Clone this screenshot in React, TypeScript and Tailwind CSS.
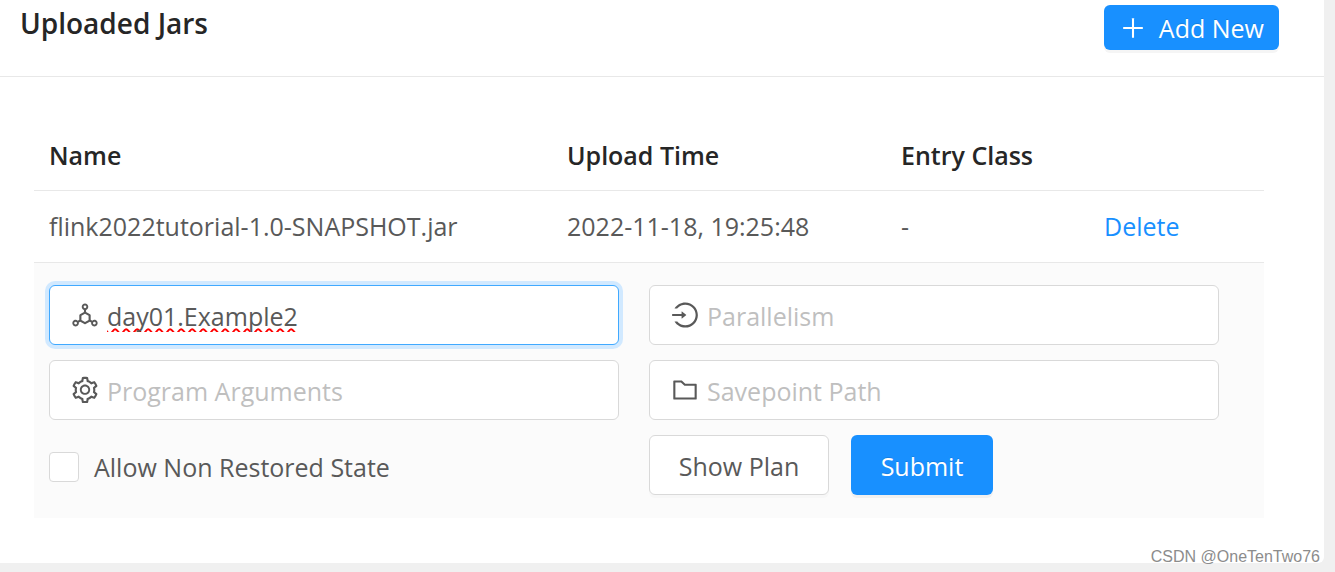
import { useState } from "react";
import type { ReactNode } from "react";
import {
    AiOutlineDeploymentUnit,
    AiOutlineFolder,
    AiOutlineLogin,
    AiOutlinePlus,
    AiOutlineSetting,
} from "react-icons/ai";

interface Jar {
    id: string;
    name: string;
    uploaded: string;
    entry: string;
}

const initialJars: Jar[] = [
    {
        id: "1",
        name: "flink2022tutorial-1.0-SNAPSHOT.jar",
        uploaded: "2022-11-18, 19:25:48",
        entry: "-",
    },
];

interface FieldProps {
    label: string;
    icon: ReactNode;
    defaultValue?: string;
    active?: boolean;
}

function Field({ label, icon, defaultValue, active }: FieldProps) {
    return (
        <label
            className={`flex h-[60px] items-center gap-[7px] rounded-md border bg-white px-5 ${
                active ? "border-[#40a9ff] ring-4 ring-[#d1e9ff]" : "border-[#d9d9d9]"
            }`}
        >
            <span className="shrink-0 text-[30px] text-[#595959]">{icon}</span>
            <input
                type="text"
                aria-label={label}
                placeholder={label}
                defaultValue={defaultValue}
                spellCheck={false}
                className={`w-full min-w-0 pt-0.5 outline-none placeholder:text-[#bfbfbf] ${
                    active ? "underline decoration-[#ff0000] decoration-wavy decoration-2 underline-offset-2 [text-decoration-skip-ink:none]" : ""
                }`}
            />
        </label>
    );
}

export default function App() {
    const [jars, setJars] = useState<Jar[]>(initialJars);

    const handleDelete = (id: string) => {
        setJars(jars.filter((j) => j.id !== id));
    };

    return (
        <div className="min-h-screen bg-[#f0f0f0] pr-[11px] pb-[9px] font-['Open_Sans','Noto_Sans',sans-serif] text-[25px] leading-8 text-[#595959]">
            <div className="rounded-br-md bg-white">
                <header className="flex items-start justify-between border-b border-[#e8e8e8] pt-[5px] pr-[45px] pb-[26px] pl-5">
                    <h1 className="text-[28px] leading-9 font-semibold text-[#262626]">Uploaded Jars</h1>
                    <button className="flex h-[45px] items-center gap-3 rounded-md bg-[#1890ff] px-[15px] text-white shadow-[0_3px_0_#f5f5f5] text-shadow-[0_-1px_0_rgba(0,0,0,0.12)]">
                        <AiOutlinePlus className="size-7" />
                        Add New
                    </button>
                </header>

                <main className="pt-[45px] pr-[60px] pb-[45px] pl-[34px]">
                    <table className="w-full table-fixed text-left">
                        <thead>
                            <tr className="h-[68px] border-b border-[#e8e8e8] text-[#262626]">
                                <th className="px-[15px] pb-0.5 font-semibold">Name</th>
                                <th className="w-[334px] px-[15px] pb-0.5 font-semibold">Upload Time</th>
                                <th className="w-[203px] px-[15px] pb-0.5 font-semibold">Entry Class</th>
                                <th className="w-[175px]"></th>
                            </tr>
                        </thead>
                        <tbody>
                            {jars.map((jar) => (
                                <tr key={jar.id} className="h-[72px] border-b border-[#e8e8e8]">
                                    <td className="px-[15px]">{jar.name}</td>
                                    <td className="px-[15px]">{jar.uploaded}</td>
                                    <td className="px-[15px]">{jar.entry}</td>
                                    <td className="px-[15px]">
                                        <button onClick={() => handleDelete(jar.id)} className="text-[#1890ff]">
                                            Delete
                                        </button>
                                    </td>
                                </tr>
                            ))}
                        </tbody>
                    </table>

                    <form
                        onSubmit={(e) => e.preventDefault()}
                        className="grid grid-cols-2 gap-x-[30px] gap-y-[15px] bg-[#fbfbfb] pt-[22px] pr-[45px] pb-[23px] pl-[15px]"
                    >
                        <Field
                            label="Entry Class"
                            icon={<AiOutlineDeploymentUnit />}
                            defaultValue="day01.Example2"
                            active
                        />
                        <Field label="Parallelism" icon={<AiOutlineLogin />} />
                        <Field label="Program Arguments" icon={<AiOutlineSetting />} />
                        <Field label="Savepoint Path" icon={<AiOutlineFolder />} />
                        <label className="flex items-center gap-[15px] pt-1">
                            <input
                                type="checkbox"
                                className="size-[30px] appearance-none rounded border border-[#d9d9d9] bg-white checked:bg-[#1890ff]"
                            />
                            Allow Non Restored State
                        </label>
                        <div className="flex gap-[22px]">
                            <button
                                type="button"
                                className="h-[60px] w-[180px] rounded-md border border-[#d9d9d9] bg-white pt-0.5 shadow-[0_3px_0_#f7f7f7]"
                            >
                                Show Plan
                            </button>
                            <button
                                type="submit"
                                className="h-[60px] w-[142px] rounded-md bg-[#1890ff] pt-0.5 text-white shadow-[0_3px_0_#f0f0f0] text-shadow-[0_-1px_0_rgba(0,0,0,0.12)]"
                            >
                                Submit
                            </button>
                        </div>
                    </form>
                </main>
            </div>
            <p className="absolute right-[15px] bottom-[3px] font-['Liberation_Sans',sans-serif] text-base leading-6 text-[#8c8c8c]">
                CSDN @OneTenTwo76
            </p>
        </div>
    );
}
